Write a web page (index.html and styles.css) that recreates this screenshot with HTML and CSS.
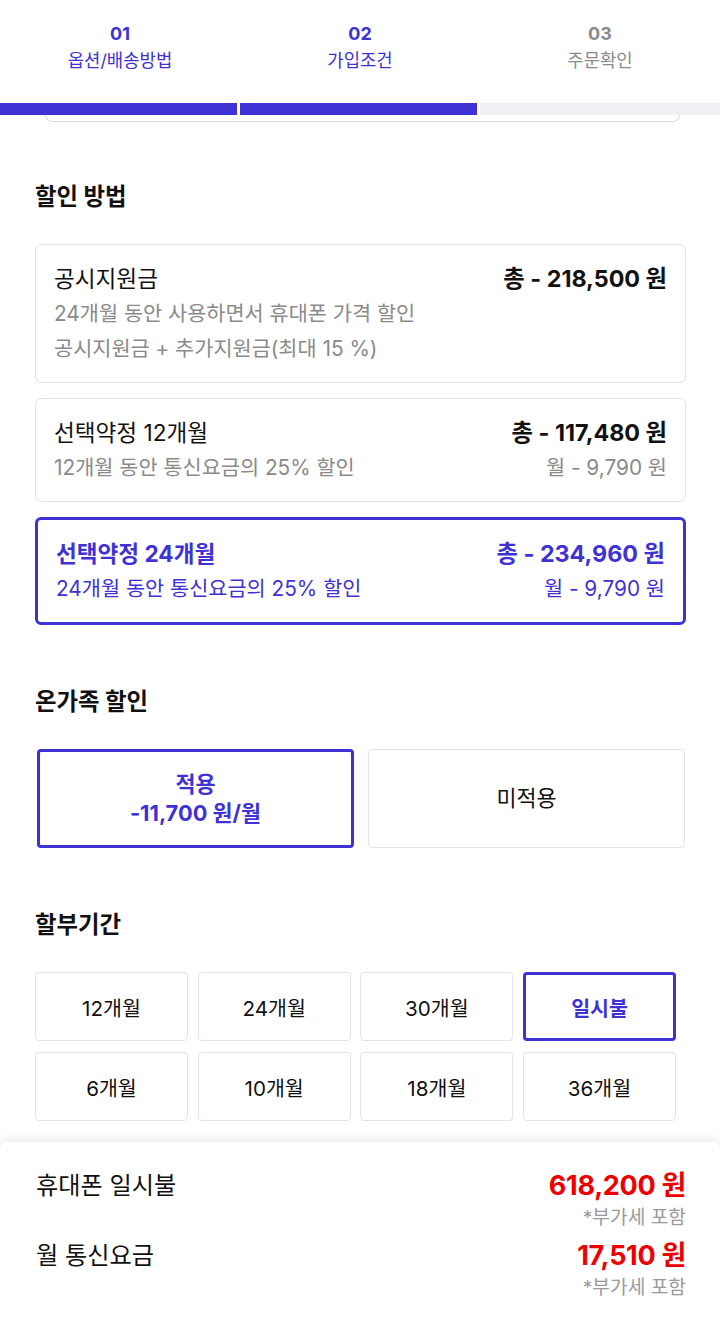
FILE: index.html
```html
<!DOCTYPE html>
<html lang="ko">
<head>
<meta charset="utf-8">
<link rel="stylesheet" href="styles.css">
</head>
<body>
<header class="steps">
  <div class="step active"><div class="num">01</div><div class="label">옵션/배송방법</div></div>
  <div class="step active"><div class="num">02</div><div class="label">가입조건</div></div>
  <div class="step"><div class="num">03</div><div class="label">주문확인</div></div>
</header>
<div class="bar">
  <div class="seg on"></div>
  <div class="seg on"></div>
  <div class="seg"></div>
</div>
<div class="ghost"></div>

<main class="content">
  <section class="sec first">
    <h2 class="sec-title">할인 방법</h2>
    <div class="cards">
      <div class="card">
        <div class="row">
          <span class="c-title">공시지원금</span>
          <span class="c-price">총 - 218,500 원</span>
        </div>
        <div class="row sub first-sub"><span>24개월 동안 사용하면서 휴대폰 가격 할인</span></div>
        <div class="row sub"><span>공시지원금 + 추가지원금(최대 15 %)</span></div>
      </div>
      <div class="card">
        <div class="row">
          <span class="c-title">선택약정 12개월</span>
          <span class="c-price">총 - 117,480 원</span>
        </div>
        <div class="row sub first-sub"><span>12개월 동안 통신요금의 25% 할인</span><span>월 - 9,790 원</span></div>
      </div>
      <div class="card selected">
        <div class="row">
          <span class="c-title">선택약정 24개월</span>
          <span class="c-price">총 - 234,960 원</span>
        </div>
        <div class="row sub first-sub"><span>24개월 동안 통신요금의 25% 할인</span><span>월 - 9,790 원</span></div>
      </div>
    </div>
  </section>

  <section class="sec">
    <h2 class="sec-title">온가족 할인</h2>
    <div class="family">
      <div class="fbtn selected"><div>적용</div><div>-11,700 원/월</div></div>
      <div class="fbtn"><div>미적용</div></div>
    </div>
  </section>

  <section class="sec">
    <h2 class="sec-title">할부기간</h2>
    <div class="terms">
      <div class="term">12개월</div>
      <div class="term">24개월</div>
      <div class="term">30개월</div>
      <div class="term selected">일시불</div>
      <div class="term">6개월</div>
      <div class="term">10개월</div>
      <div class="term">18개월</div>
      <div class="term">36개월</div>
    </div>
  </section>
</main>

<footer class="summary">
  <div class="s-row">
    <span class="s-label">휴대폰 일시불</span>
    <span class="s-price">618,200 원</span>
  </div>
  <div class="s-note">*부가세 포함</div>
  <div class="s-row second">
    <span class="s-label">월 통신요금</span>
    <span class="s-price">17,510 원</span>
  </div>
  <div class="s-note">*부가세 포함</div>
</footer>
</body>
</html>
```

FILE: styles.css
```css
* { box-sizing: border-box; }
html, body { margin: 0; padding: 0; background: #fff; }
body {
  font-family: Inter, "Noto Sans CJK KR", sans-serif;
  color: #111;
  width: 720px;
  height: 1325px;
  overflow: hidden;
}

.steps {
  display: grid;
  grid-template-columns: repeat(3, 1fr);
  height: 103px;
  padding-top: 20px;
  text-align: center;
  color: #8a8a8a;
}
.step .num {
  font-size: 18px;
  font-weight: 700;
  line-height: 28px;
}
.step .label {
  font-size: 17.8px;
  line-height: 26px;
}
.step.active { color: #3f32d5; }

.bar {
  display: grid;
  grid-template-columns: 237px 237px 1fr;
  column-gap: 3px;
  height: 12px;
  background: #fff;
}
.seg { background: #efeff4; }
.seg.on { background: #3f32d5; }

.ghost {
  height: 7px;
  margin: 0 40px 0 45px;
  border: 1px solid #dcdcdc;
  border-top: none;
  border-radius: 0 0 22px 22px;
}

.content { padding: 0 34px 0 35px; }

.sec { margin-top: 62px; }
.sec.first { margin-top: 60px; }
.sec-title {
  margin: 0 0 32px;
  font-size: 23.4px;
  font-weight: 700;
  line-height: 30px;
}

.cards { display: flex; flex-direction: column; gap: 15px; }
.card {
  border: 1px solid #e3e3e3;
  border-radius: 6px;
  padding: 20px 18px 16px;
}
.card.selected {
  border: 3px solid #3f32d5;
  color: #3f32d5;
}
.row {
  display: flex;
  justify-content: space-between;
  align-items: center;
}
.c-title { font-size: 22.6px; line-height: 28px; }
.c-price { font-size: 23.3px; font-weight: 700; line-height: 28px; }
.card.selected .c-title { font-weight: 700; }
.sub {
  font-size: 20.8px;
  line-height: 35px;
  color: #8a8a8a;
}
.first-sub { margin-top: 3px; }
.card.selected .sub { color: #3f32d5; }

.family {
  display: grid;
  grid-template-columns: 1fr 1fr;
  column-gap: 14px;
  padding: 0 1px 0 2px;
}
.fbtn {
  height: 99px;
  border: 1px solid #e3e3e3;
  border-radius: 4px;
  display: flex;
  flex-direction: column;
  justify-content: center;
  align-items: center;
  font-size: 21.8px;
  line-height: 29px;
}
.fbtn.selected {
  border: 3px solid #3f32d5;
  color: #3f32d5;
  font-weight: 700;
}

.terms {
  display: grid;
  grid-template-columns: repeat(4, 153px);
  column-gap: 9.7px;
  row-gap: 11px;
}
.term {
  height: 69px;
  border: 1px solid #e3e3e3;
  border-radius: 4px;
  display: flex;
  align-items: center;
  justify-content: center;
  font-size: 20.6px;
}
.term.selected {
  border: 3px solid #3f32d5;
  color: #3f32d5;
  font-weight: 700;
}

.summary {
  margin-top: 21px;
  padding: 29px 34px 26px 36px;
  border-radius: 8px 8px 0 0;
  background: #fff;
  box-shadow: 0 -4px 12px rgba(0,0,0,0.07);
}
.s-row {
  display: flex;
  justify-content: space-between;
  align-items: center;
  line-height: 30px;
}
.s-row.second { margin-top: 12px; }
.s-label { font-size: 24.2px; }
.s-price {
  font-size: 27px;
  font-weight: 700;
  color: #ee0000;
  letter-spacing: -0.3px;
}
.s-note {
  margin-top: 4px;
  text-align: right;
  font-size: 19.2px;
  line-height: 24px;
  color: #9a9a9a;
}
```
